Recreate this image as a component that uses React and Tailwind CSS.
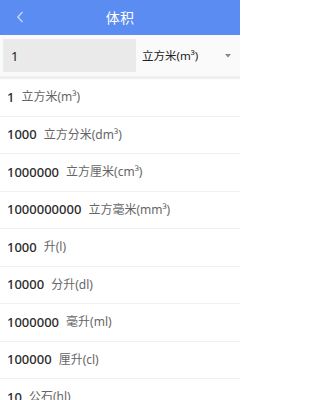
import React, { useState } from 'react';

const units = [
    { value: '1', label: '立方米(m³)' },
    { value: '1000', label: '立方分米(dm³)' },
    { value: '1000000', label: '立方厘米(cm³)' },
    { value: '1000000000', label: '立方毫米(mm³)' },
    { value: '1000', label: '升(l)' },
    { value: '10000', label: '分升(dl)' },
    { value: '1000000', label: '毫升(ml)' },
    { value: '100000', label: '厘升(cl)' },
    { value: '10', label: '公石(hl)' },
];

const App = () => {
    const [amount, setAmount] = useState('1');

    return (
        <div className="w-[240px] h-[400px] overflow-hidden bg-white" style={{ fontFamily: '"Noto Sans", "Noto Sans CJK SC", sans-serif' }}>
            {/* barra superior */}
            <div className="h-[35px] bg-[#5b8cf1] flex items-center relative">
                <button className="absolute left-[14px] top-[9px] w-[12px] h-[16px] flex items-center justify-center">
                    <svg width="8" height="12" viewBox="0 0 8 12" fill="none">
                        <path d="M6.5 1 L1.8 6 L6.5 11" stroke="#c9d9fb" strokeWidth="1.3" />
                    </svg>
                </button>
                <h1 className="flex-1 text-center text-white text-[14px] tracking-wide">体积</h1>
            </div>

            {/* entrada */}
            <div className="h-[41px] flex items-center bg-[#fafafa] border-b-[3px] border-[#efefef] box-content">
                <input
                    value={amount}
                    onChange={(e) => setAmount(e.target.value)}
                    className="ml-[3px] w-[133px] h-[33px] bg-[#eaeaea] px-[8px] text-[13px] text-[#222] outline-none"
                />
                <div className="flex-1 flex items-center justify-between pl-[6px] pr-[9px]">
                    <span className="text-[11.5px] text-[#222]">立方米(m³)</span>
                    <svg width="6" height="4" viewBox="0 0 6 4"><path d="M0 0 H6 L3 3.5 Z" fill="#888" /></svg>
                </div>
            </div>

            {/* resultados */}
            <div>
                {units.map((u, i) => (
                    <div key={i} className="h-[37.5px] flex items-center gap-[7px] pl-[7px] border-b border-[#f0f0f0]">
                        <span className="text-[13px] font-medium text-[#2a2a2a]">{u.value}</span>
                        <span className="text-[12px] text-[#666]">{u.label}</span>
                    </div>
                ))}
            </div>
        </div>
    );
};

export default App;
